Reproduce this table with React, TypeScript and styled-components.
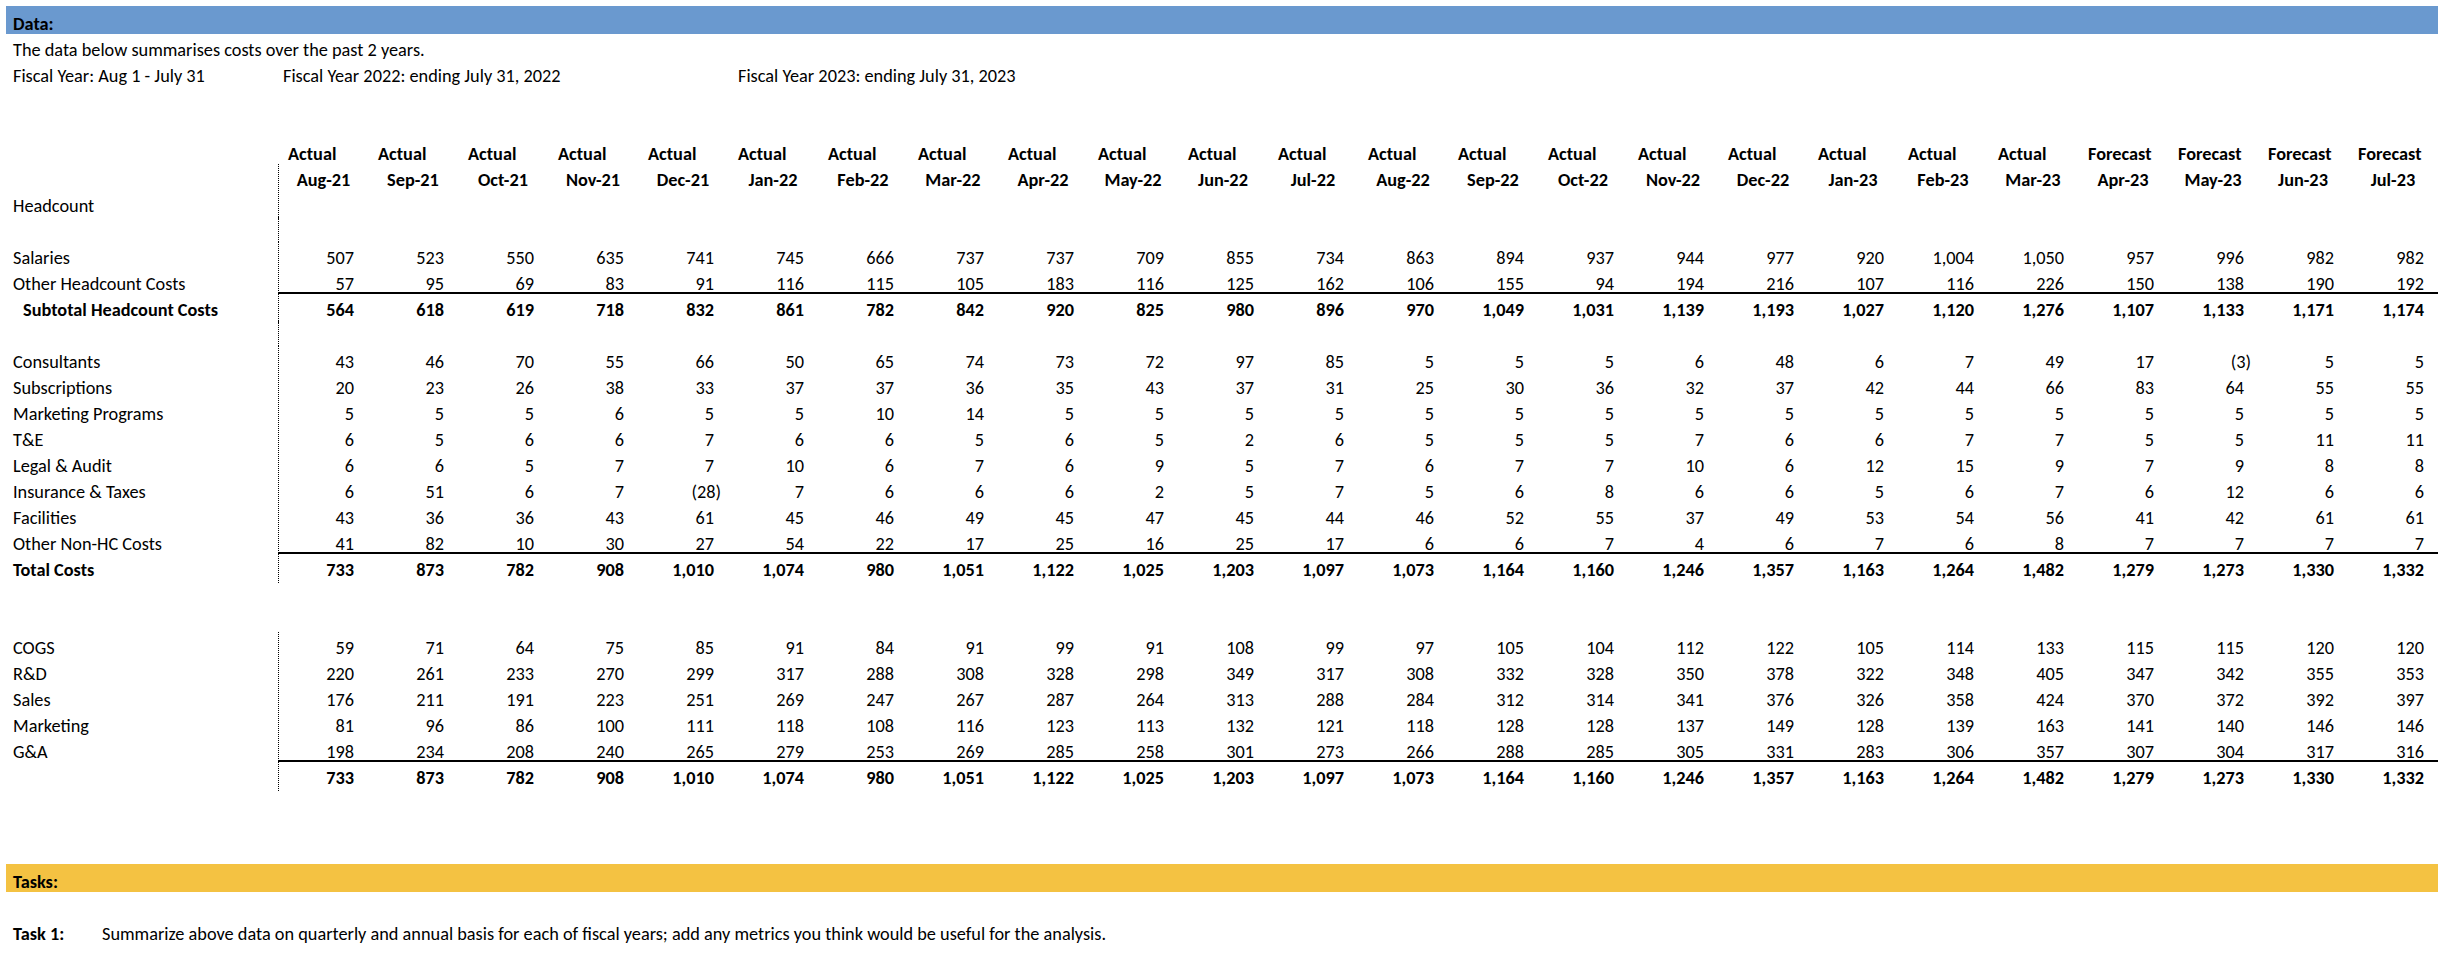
import React from 'react';
import styled, { createGlobalStyle, css } from 'styled-components';

const GlobalStyle = createGlobalStyle`
  html, body { margin: 0; padding: 0; background: #ffffff; }
  body {
    font-family: Carlito, Calibri, "Liberation Sans", sans-serif;
    font-size: 18.3px;
    color: #000000;
  }
`;

const Page = styled.main`
  width: 2432px;
  padding: 6px 10px 0 6px;
`;

const SectionBar = styled.div<{ $tone: 'blue' | 'gold' }>`
  height: 28px;
  box-sizing: border-box;
  padding: 4px 7px 0;
  line-height: 28px;
  font-weight: 700;
  background: ${p => (p.$tone === 'blue' ? '#6a99cf' : '#f4c242')};
`;

const SheetRow = styled.div`
  display: grid;
  grid-template-columns: 272px repeat(24, 90px);
  height: 26px;
`;

const Spacer = styled.div<{ $h: number }>`
  height: ${p => p.$h}px;
`;

const Label = styled.div<{ $bold?: boolean; $indent?: boolean; $span?: boolean }>`
  padding: 3px 0 0 ${p => (p.$indent ? 17 : 7)}px;
  line-height: 26px;
  white-space: nowrap;
  font-weight: ${p => (p.$bold ? 700 : 400)};
  ${p => p.$span && css`grid-column: 1 / -1;`}
`;

const Note = styled.div<{ $start: number; $span: number; $pad: number }>`
  grid-column: ${p => p.$start} / span ${p => p.$span};
  padding: 3px 0 0 ${p => p.$pad}px;
  line-height: 26px;
  white-space: nowrap;
`;

const HeadTop = styled.div`
  padding: 3px 0 0 10px;
  line-height: 26px;
  font-weight: 700;
  white-space: nowrap;
`;

const divider = css`
  border-left: 1px dotted #000;
`;

const HeadDate = styled.div<{ $divider?: boolean }>`
  padding-top: 3px;
  line-height: 26px;
  font-weight: 700;
  text-align: center;
  white-space: nowrap;
  ${p => p.$divider && divider}
`;

const Value = styled.div<{ $bold?: boolean; $rule?: boolean; $divider?: boolean; $negative?: boolean }>`
  padding: 3px ${p => (p.$negative ? 7 : 14)}px 0 0;
  line-height: 26px;
  text-align: right;
  white-space: nowrap;
  font-weight: ${p => (p.$bold ? 700 : 400)};
  ${p => p.$divider && divider}
  ${p => p.$rule && css`box-shadow: 0 -2px 0 #000;`}
`;

const TaskRow = styled.div`
  display: grid;
  grid-template-columns: 89px 1fr;
  height: 26px;
`;

const TaskText = styled.div`
  padding: 3px 0 0 7px;
  line-height: 26px;
  white-space: nowrap;
`;

const months = [
  'Aug-21', 'Sep-21', 'Oct-21', 'Nov-21', 'Dec-21', 'Jan-22', 'Feb-22', 'Mar-22',
  'Apr-22', 'May-22', 'Jun-22', 'Jul-22', 'Aug-22', 'Sep-22', 'Oct-22', 'Nov-22',
  'Dec-22', 'Jan-23', 'Feb-23', 'Mar-23', 'Apr-23', 'May-23', 'Jun-23', 'Jul-23',
];
const kinds = months.map((_, i) => (i < 20 ? 'Actual' : 'Forecast'));

const split = (s: string) => s.trim().split(/\s+/);

const totals = split('733 873 782 908 1,010 1,074 980 1,051 1,122 1,025 1,203 1,097 1,073 1,164 1,160 1,246 1,357 1,163 1,264 1,482 1,279 1,273 1,330 1,332');

type Line = {
  label?: string;
  values?: string[];
  bold?: boolean;
  indent?: boolean;
  rule?: boolean;
  framed?: boolean;
};

const costLines: Line[] = [
  { label: 'Headcount', framed: true },
  { framed: true },
  { label: 'Salaries', framed: true, values: split('507 523 550 635 741 745 666 737 737 709 855 734 863 894 937 944 977 920 1,004 1,050 957 996 982 982') },
  { label: 'Other Headcount Costs', framed: true, values: split('57 95 69 83 91 116 115 105 183 116 125 162 106 155 94 194 216 107 116 226 150 138 190 192') },
  { label: 'Subtotal Headcount Costs', framed: true, bold: true, indent: true, rule: true, values: split('564 618 619 718 832 861 782 842 920 825 980 896 970 1,049 1,031 1,139 1,193 1,027 1,120 1,276 1,107 1,133 1,171 1,174') },
  { framed: true },
  { label: 'Consultants', framed: true, values: split('43 46 70 55 66 50 65 74 73 72 97 85 5 5 5 6 48 6 7 49 17 (3) 5 5') },
  { label: 'Subscriptions', framed: true, values: split('20 23 26 38 33 37 37 36 35 43 37 31 25 30 36 32 37 42 44 66 83 64 55 55') },
  { label: 'Marketing Programs', framed: true, values: split('5 5 5 6 5 5 10 14 5 5 5 5 5 5 5 5 5 5 5 5 5 5 5 5') },
  { label: 'T&E', framed: true, values: split('6 5 6 6 7 6 6 5 6 5 2 6 5 5 5 7 6 6 7 7 5 5 11 11') },
  { label: 'Legal & Audit', framed: true, values: split('6 6 5 7 7 10 6 7 6 9 5 7 6 7 7 10 6 12 15 9 7 9 8 8') },
  { label: 'Insurance & Taxes', framed: true, values: split('6 51 6 7 (28) 7 6 6 6 2 5 7 5 6 8 6 6 5 6 7 6 12 6 6') },
  { label: 'Facilities', framed: true, values: split('43 36 36 43 61 45 46 49 45 47 45 44 46 52 55 37 49 53 54 56 41 42 61 61') },
  { label: 'Other Non-HC Costs', framed: true, values: split('41 82 10 30 27 54 22 17 25 16 25 17 6 6 7 4 6 7 6 8 7 7 7 7') },
  { label: 'Total Costs', framed: true, bold: true, rule: true, values: totals },
];

const functionLines: Line[] = [
  { label: 'COGS', framed: true, values: split('59 71 64 75 85 91 84 91 99 91 108 99 97 105 104 112 122 105 114 133 115 115 120 120') },
  { label: 'R&D', framed: true, values: split('220 261 233 270 299 317 288 308 328 298 349 317 308 332 328 350 378 322 348 405 347 342 355 353') },
  { label: 'Sales', framed: true, values: split('176 211 191 223 251 269 247 267 287 264 313 288 284 312 314 341 376 326 358 424 370 372 392 397') },
  { label: 'Marketing', framed: true, values: split('81 96 86 100 111 118 108 116 123 113 132 121 118 128 128 137 149 128 139 163 141 140 146 146') },
  { label: 'G&A', framed: true, values: split('198 234 208 240 265 279 253 269 285 258 301 273 266 288 285 305 331 283 306 357 307 304 317 316') },
  { framed: true, bold: true, rule: true, values: totals },
];

const DataLine = ({ line }: { line: Line }) => (
  <SheetRow>
    <Label $bold={line.bold} $indent={line.indent}>{line.label ?? ''}</Label>
    {months.map((m, i) => {
      const v = line.values?.[i] ?? '';
      return (
        <Value
          key={m}
          $bold={line.bold}
          $rule={line.rule}
          $divider={line.framed && i === 0}
          $negative={v.startsWith('(')}
        >
          {v}
        </Value>
      );
    })}
  </SheetRow>
);

export default function App() {
  return (
    <>
      <GlobalStyle />
      <Page>
        <SectionBar $tone="blue">Data:</SectionBar>
        <SheetRow>
          <Label $span>The data below summarises costs over the past 2 years.</Label>
        </SheetRow>
        <SheetRow>
          <Label>Fiscal Year: Aug 1 - July 31</Label>
          <Note $start={2} $span={5} $pad={5}>Fiscal Year 2022: ending July 31, 2022</Note>
          <Note $start={7} $span={6} $pad={10}>Fiscal Year 2023: ending July 31, 2023</Note>
        </SheetRow>
        <Spacer $h={52} />
        <SheetRow>
          <Label />
          {months.map((m, i) => (
            <HeadTop key={m}>{kinds[i]}</HeadTop>
          ))}
        </SheetRow>
        <SheetRow>
          <Label />
          {months.map((m, i) => (
            <HeadDate key={m} $divider={i === 0}>{m}</HeadDate>
          ))}
        </SheetRow>
        {costLines.map((line, i) => (
          <DataLine key={`c${i}`} line={line} />
        ))}
        <Spacer $h={52} />
        {functionLines.map((line, i) => (
          <DataLine key={`f${i}`} line={line} />
        ))}
        <Spacer $h={76} />
        <SectionBar $tone="gold">Tasks:</SectionBar>
        <Spacer $h={26} />
        <TaskRow>
          <Label $bold>Task 1:</Label>
          <TaskText>
            Summarize above data on quarterly and annual basis for each of fiscal years; add any metrics you think would be useful for the analysis.
          </TaskText>
        </TaskRow>
      </Page>
    </>
  );
}
